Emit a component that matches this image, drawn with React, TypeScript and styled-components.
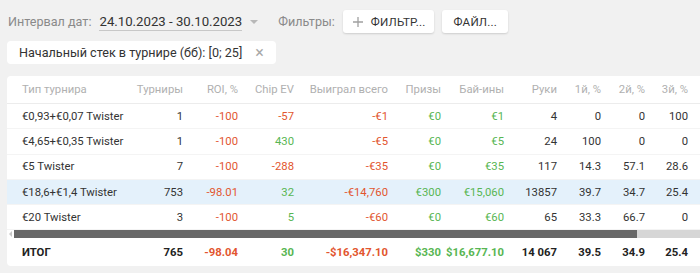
import React from 'react'
import styled, { createGlobalStyle } from 'styled-components'

const GlobalStyle = createGlobalStyle`
    html, body {
        margin: 0;
        padding: 0;
        background: #f1f1f1;
        font-family: Roboto, "Liberation Sans", Arial, sans-serif;
        overflow: hidden;
    }
`

const red = '#e2562f'
const green = '#58b653'

const StyledPage = styled.div`
    width: 700px;
    height: 273px;
    padding: 10px 0 0 7px;
    box-sizing: border-box;
    display: flex;
    flex-direction: column;
`

const StyledToolbar = styled.div`
    display: flex;
    align-items: center;
    gap: 8px;
    height: 23px;
    padding-left: 1px;
    font-size: 12.6px;
`

const StyledLabel = styled.span`
    color: #8a8a8a;
`

const StyledDate = styled.span`
    color: #333;
    font-size: 13.2px;
    border-bottom: 1px solid #c8c8c8;
    line-height: 17px;
`

const StyledCaret = styled.span`
    width: 0;
    height: 0;
    border-left: 4px solid transparent;
    border-right: 4px solid transparent;
    border-top: 4px solid #b8b8b8;
    margin: 0 12px 0 0;
`

const StyledButton = styled.button<{ wide?: boolean }>`
    height: 23px;
    padding: 0 ${props => (props.wide ? 9 : 11)}px;
    display: flex;
    align-items: center;
    gap: 7px;
    background: #fff;
    border: none;
    border-radius: 3px;
    box-shadow: 0 1px 2px rgba(0, 0, 0, 0.15);
    font-family: inherit;
    font-size: 11.6px;
    color: #333;
    letter-spacing: 0.2px;
`

const StyledChip = styled.div`
    margin-top: 8px;
    align-self: flex-start;
    height: 23px;
    display: flex;
    align-items: center;
    padding: 0 12px 0 12px;
    background: #fff;
    border-radius: 4px;
    font-size: 12.6px;
    color: #333;
`

const StyledClose = styled.span`
    margin-left: 13px;
    color: #a8a8a8;
    font-size: 16px;
    line-height: 1;
`

const StyledCard = styled.div`
    margin-top: 12px;
    width: 693px;
    background: #fff;
    border-radius: 4px 0 0 4px;
    font-size: 11.3px;
`

const StyledRow = styled.div<{ variant?: 'head' | 'body' | 'total'; active?: boolean }>`
    display: grid;
    grid-template-columns: 100px 61px 55px 56px 94px 53px 63px 53px 44px 44px 43px;
    align-items: center;
    padding: 0 12px 0 15px;
    height: 25.3px;
    color: #333;
    border-bottom: 1px solid #f4f4f4;
    box-sizing: border-box;

    ${props => props.variant === 'head' && `
        height: 28px;
        color: #b0b0b0;
        border-bottom: 1px solid #ececec;
    `}
    ${props => props.variant === 'total' && `
        height: 28px;
        font-weight: 700;
        color: #222;
        border-bottom: none;
    `}
    ${props => props.active && `
        background: #e4f1fb;
    `}
`

const StyledCell = styled.div<{ color?: string; left?: boolean }>`
    text-align: ${props => (props.left ? 'left' : 'right')};
    white-space: nowrap;
    ${props => props.color && `
        color: ${props.color};
    `}
`

const StyledScrollTrack = styled.div`
    height: 8px;
    background: #d6d6d6;
    display: flex;
`

const StyledScrollArrow = styled.div`
    width: 7px;
    display: flex;
    align-items: center;
    justify-content: center;
    background: #fff;

    &::before {
        content: '';
        border-top: 3px solid transparent;
        border-bottom: 3px solid transparent;
        border-right: 3px solid #c8c8c8;
    }
`

const StyledScrollThumb = styled.div`
    width: 623px;
    background: #686868;
`

type Cell = { v: string; c?: string }

const headers = ['Тип турнира', 'Турниры', 'ROI, %', 'Chip EV', 'Выиграл всего', 'Призы', 'Бай-ины', 'Руки', '1й, %', '2й, %', '3й, %']

const r = (v: string): Cell => ({ v, c: red })
const g = (v: string): Cell => ({ v, c: green })
const n = (v: string): Cell => ({ v })

const rows: Cell[][] = [
    [n('€0,93+€0,07 Twister'), n('1'), r('-100'), r('-57'), r('-€1'), g('€0'), g('€1'), n('4'), n('0'), n('0'), n('100')],
    [n('€4,65+€0,35 Twister'), n('1'), r('-100'), g('430'), r('-€5'), g('€0'), g('€5'), n('24'), n('100'), n('0'), n('0')],
    [n('€5 Twister'), n('7'), r('-100'), r('-288'), r('-€35'), g('€0'), g('€35'), n('117'), n('14.3'), n('57.1'), n('28.6')],
    [n('€18,6+€1,4 Twister'), n('753'), r('-98.01'), g('32'), r('-€14,760'), g('€300'), g('€15,060'), n('13857'), n('39.7'), n('34.7'), n('25.4')],
    [n('€20 Twister'), n('3'), r('-100'), g('5'), r('-€60'), g('€0'), g('€60'), n('65'), n('33.3'), n('66.7'), n('0')],
]

const total: Cell[] = [n('ИТОГ'), n('765'), r('-98.04'), g('30'), r('-$16,347.10'), g('$330'), g('$16,677.10'), n('14 067'), n('39.5'), n('34.9'), n('25.4')]

const PlusIcon = () => (
    <svg width="12" height="12" viewBox="0 0 12 12">
        <path d="M6 1v10M1 6h10" stroke="#a0a0a0" strokeWidth="1.3" />
    </svg>
)

const App = () => {
    return (
        <StyledPage>
            <GlobalStyle />
            <StyledToolbar>
                <StyledLabel>Интервал дат:</StyledLabel>
                <StyledDate>24.10.2023 - 30.10.2023</StyledDate>
                <StyledCaret />
                <StyledLabel>Фильтры:</StyledLabel>
                <StyledButton wide><PlusIcon />ФИЛЬТР...</StyledButton>
                <StyledButton>ФАЙЛ...</StyledButton>
            </StyledToolbar>

            <StyledChip>
                Начальный стек в турнире (бб): [0; 25]
                <StyledClose>×</StyledClose>
            </StyledChip>

            <StyledCard>
                <StyledRow variant="head">
                    {headers.map((h, i) => (
                        <StyledCell key={h} left={i === 0}>{h}</StyledCell>
                    ))}
                </StyledRow>
                {
                    rows.map((row, idx) => (
                        <StyledRow key={idx} variant="body" active={idx === 3}>
                            {row.map((cell, i) => (
                                <StyledCell key={i} left={i === 0} color={cell.c}>{cell.v}</StyledCell>
                            ))}
                        </StyledRow>
                    ))
                }
                <StyledScrollTrack>
                    <StyledScrollArrow />
                    <StyledScrollThumb />
                </StyledScrollTrack>
                <StyledRow variant="total">
                    {total.map((cell, i) => (
                        <StyledCell key={i} left={i === 0} color={cell.c}>{cell.v}</StyledCell>
                    ))}
                </StyledRow>
            </StyledCard>
        </StyledPage>
    )
}

export default App
